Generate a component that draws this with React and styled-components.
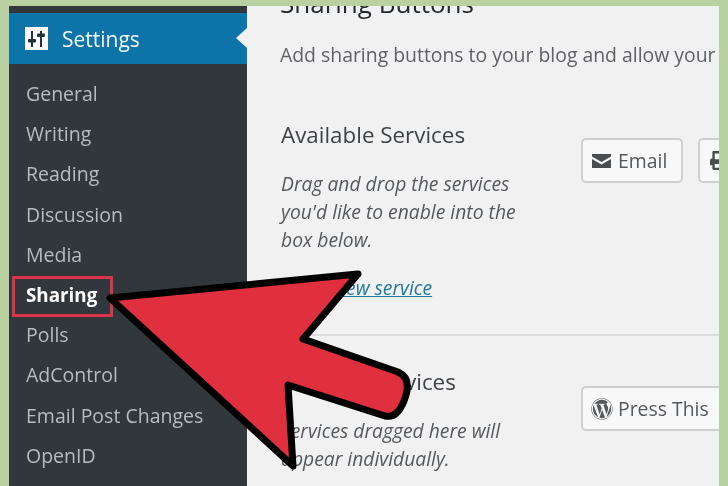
import React from 'react'
import styled, { createGlobalStyle } from 'styled-components'
import { FaPrint, FaWordpress } from 'react-icons/fa'

const GlobalStyle = createGlobalStyle`
  html, body {
    margin: 0;
    height: 486px;
    overflow: hidden;
    background: #b9d1a1;
  }
  * {
    box-sizing: border-box;
    font-family: 'Open Sans', 'Noto Sans', sans-serif;
  }
`

const Frame = styled.div`
  position: relative;
  width: 728px;
  height: 486px;
  padding: 6px 9px 0;
  background: #b9d1a1;
  filter: blur(0.5px);
`

const Screen = styled.div`
  display: flex;
  height: 480px;
  overflow: hidden;
  background: #f1f1f1;
`

const Sidebar = styled.nav`
  flex: 0 0 238px;
  background: #32373c;
  padding-top: 7px;
`

const Current = styled.div`
  position: relative;
  display: flex;
  align-items: center;
  gap: 14px;
  height: 51px;
  padding-left: 16px;
  background: #0d74aa;
  color: #f4fafc;
  font-size: 21px;
  &::after {
    content: '';
    position: absolute;
    right: 0;
    top: 15px;
    border: 10px solid transparent;
    border-right: 11px solid #f1f1f1;
    border-left: 0;
  }
`

const Menu = styled.ul`
  list-style: none;
  margin: 0;
  padding: 9.5px 0 0 3px;
`

const Item = styled.li`
  display: flex;
  align-items: center;
  width: ${p => (p.$active ? '101px' : 'auto')};
  height: ${p => (p.$active ? '41px' : '40.2px')};
  margin: ${p => (p.$active ? '2px 0 -2.8px' : '0')};
  padding-left: ${p => (p.$active ? '11px' : '14px')};
  padding-bottom: ${p => (p.$active ? '3px' : '0')};
  font-size: ${p => (p.$active ? '18.8px' : '19.5px')};
  font-weight: ${p => (p.$active ? 700 : 400)};
  color: ${p => (p.$active ? '#ffffff' : '#b8bcbf')};
  border: ${p => (p.$active ? '3px solid #d9344a' : '0')};
  white-space: nowrap;
`

const Main = styled.main`
  flex: 1;
  min-width: 0;
  overflow: hidden;
`

const PageTitle = styled.h1`
  margin: -20px 0 0 33px;
  font-size: 26px;
  line-height: 34px;
  font-weight: 400;
  color: #23282d;
  white-space: nowrap;
`

const Intro = styled.p`
  margin: 21px 0 0 33px;
  font-size: 19.4px;
  line-height: 28px;
  color: #5f6166;
  white-space: nowrap;
`

const Section = styled.section`
  display: grid;
  grid-template-columns: 300px 1fr;
  margin-left: 34px;
  padding-top: ${p => p.$top}px;
  height: ${p => p.$height}px;
  border-bottom: ${p => (p.$divider ? '2px solid #dcdcdc' : '0')};
`

const Heading = styled.h2`
  margin: 0 0 20px;
  font-size: 22.4px;
  line-height: 30px;
  font-weight: 400;
  color: #3f4347;
  white-space: nowrap;
`

const Note = styled.p`
  margin: 0;
  width: 245px;
  font-size: 19.3px;
  line-height: 28px;
  font-style: italic;
  color: #55585c;
`

const AddLink = styled.a`
  display: block;
  margin-top: 20px;
  font-size: 19.3px;
  line-height: 28px;
  font-style: italic;
  color: #23799f;
  text-decoration: underline;
`

const Buttons = styled.div`
  display: flex;
  gap: 15px;
  align-items: flex-start;
  margin-top: ${p => p.$top}px;
  overflow: hidden;
`

const Button = styled.div`
  flex: 0 0 auto;
  display: flex;
  align-items: center;
  gap: ${p => p.$gap}px;
  width: ${p => p.$width}px;
  height: ${p => p.$height}px;
  padding-left: ${p => p.$pad}px;
  background: #f8f8f8;
  border: 2px solid #cfcfcf;
  border-radius: 5px;
  font-size: 19.4px;
  color: #55595d;
  white-space: nowrap;
`

const Arrow = styled.svg`
  position: absolute;
  left: 0;
  top: 0;
  width: 728px;
  height: 486px;
  pointer-events: none;
`

const SettingsIcon = () => (
  <svg width="23" height="23" viewBox="0 0 23 23">
    <rect width="23" height="23" fill="#fbfdfe" />
    <path d="M7 4v16M16 4v16" stroke="#22303a" strokeWidth="2" />
    <rect x="3" y="12" width="8" height="3.500" rx="1" fill="#22303a" />
    <rect x="12" y="6.500" width="8" height="3.500" rx="1" fill="#22303a" />
  </svg>
)

const MailIcon = () => (
  <svg width="19" height="14" viewBox="0 0 19 14">
    <path d="M0 0h19v2.500L9.500 8 0 2.500z" fill="#4a4d50" />
    <path d="M0 5l9.500 5.500L19 5v9H0z" fill="#4a4d50" />
  </svg>
)

const items = ['General', 'Writing', 'Reading', 'Discussion', 'Media', 'Sharing', 'Polls', 'AdControl', 'Email Post Changes', 'OpenID']

const App = () => (
  <>
    <GlobalStyle />
    <Frame>
      <Screen>
        <Sidebar>
          <Current>
            <SettingsIcon />
            Settings
          </Current>
          <Menu>
            {items.map(item => (
              <Item key={item} $active={item === 'Sharing'}>{item}</Item>
            ))}
          </Menu>
        </Sidebar>
        <Main>
          <PageTitle>Sharing Buttons</PageTitle>
          <Intro>Add sharing buttons to your blog and allow your</Intro>
          <Section $top={51} $height={267} $divider>
            <div>
              <Heading>Available Services</Heading>
              <Note>Drag and drop the services you'd like to enable into the box below.</Note>
              <AddLink>Add a new service</AddLink>
            </div>
            <Buttons $top={18}>
              <Button $width={102} $height={45} $pad={9} $gap={7}>
                <MailIcon />
                Email
              </Button>
              <Button $width={102} $height={45} $pad={10} $gap={7}>
                <FaPrint size={19} color="#4a4d50" />
                Print
              </Button>
            </Buttons>
          </Section>
          <Section $top={31} $height={150}>
            <div>
              <Heading>Enabled Services</Heading>
              <Note>Services dragged here will appear individually.</Note>
            </div>
            <Buttons $top={19}>
              <Button $width={180} $height={45} $pad={8} $gap={5}>
                <FaWordpress size={22} color="#55595d" />
                Press This
              </Button>
            </Buttons>
          </Section>
        </Main>
      </Screen>
      <Arrow viewBox="0 0 728 486">
        <path
          d="M110 298 L358 274 L303 339 L398 372 Q411 378 406 395 Q399 419 385 416 L288 385 L293 466 Z"
          fill="#e02f3f"
          stroke="#000"
          strokeWidth="7"
          strokeLinejoin="round"
        />
      </Arrow>
    </Frame>
  </>
)

export default App
